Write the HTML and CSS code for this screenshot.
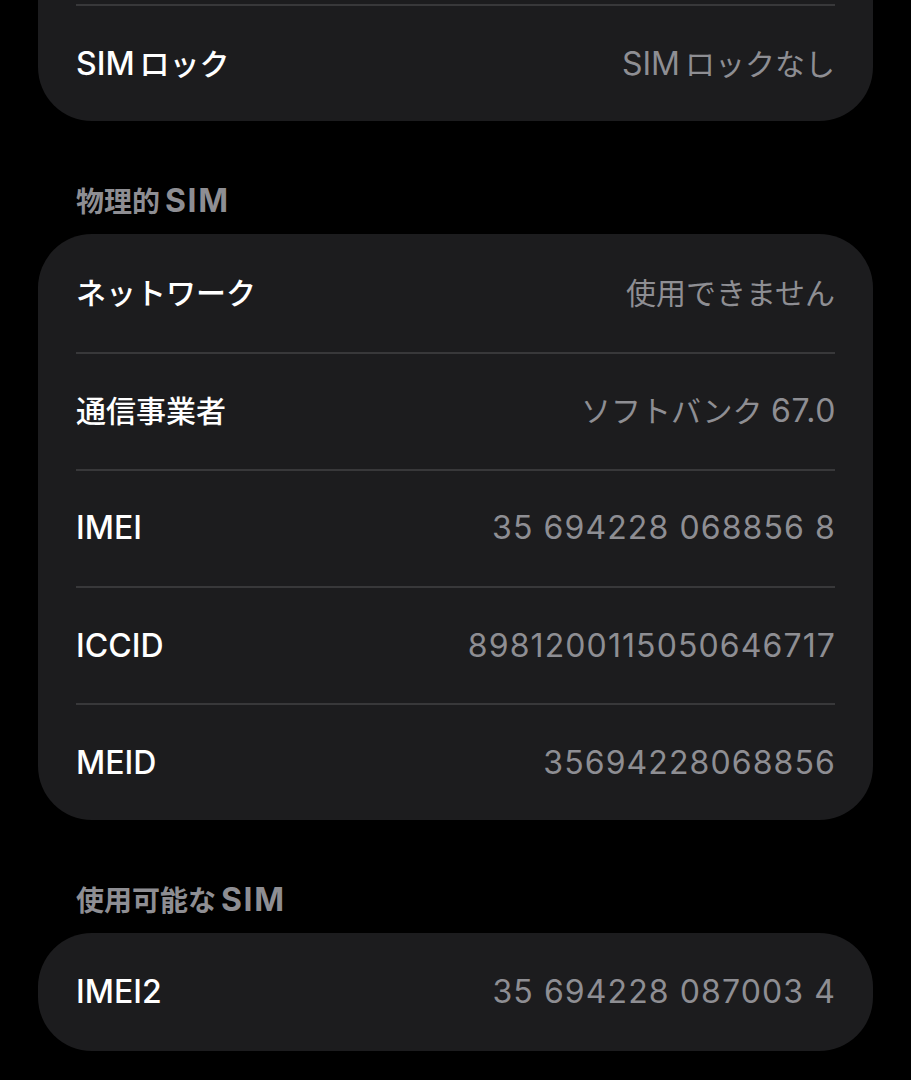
FILE: index.html
```html
<!DOCTYPE html>
<html lang="ja">
<head>
<meta charset="utf-8">
<link rel="stylesheet" href="styles.css">
</head>
<body>
<div class="page">
  <div class="card card-first">
    <div class="row"><span class="label"></span><span class="value"></span></div>
    <div class="row"><span class="label"><span class="lat gap">SIM</span>ロック</span><span class="value"><span class="lat gap">SIM</span>ロックなし</span></div>
  </div>

  <div class="section-title">物理的<span class="lat-h">SIM</span></div>
  <div class="card">
    <div class="row"><span class="label">ネットワーク</span><span class="value">使用できません</span></div>
    <div class="row"><span class="label">通信事業者</span><span class="value">ソフトバンク <span class="num">67.0</span></span></div>
    <div class="row"><span class="label lat">IMEI</span><span class="value num">35 694228 068856 8</span></div>
    <div class="row"><span class="label lat">ICCID</span><span class="value num">8981200115050646717</span></div>
    <div class="row"><span class="label lat">MEID</span><span class="value num">35694228068856</span></div>
  </div>

  <div class="section-title">使用可能な<span class="lat-h">SIM</span></div>
  <div class="card">
    <div class="row"><span class="label lat">IMEI2</span><span class="value num">35 694228 087003 4</span></div>
  </div>
</div>
</body>
</html>
```

FILE: styles.css
```css
html, body {
  margin: 0;
  padding: 0;
  background: #000;
}
body {
  font-family: "Inter", "Noto Sans CJK JP", sans-serif;
  -webkit-font-smoothing: antialiased;
}
.page {
  padding: 0 38px;
  overflow: hidden;
  height: 1080px;
  box-sizing: border-box;
}
.card {
  background: #1c1c1e;
  border-radius: 54px;
  padding: 0 38px;
}
.card-first {
  margin-top: -113px;
}
.row {
  height: 117.2px;
  display: flex;
  align-items: center;
  justify-content: space-between;
  box-sizing: border-box;
  font-size: 30px;
  line-height: 40px;
  white-space: nowrap;
}
.row + .row {
  border-top: 2px solid #38383a;
}
.label {
  color: #fff;
  font-weight: 500;
}
.value {
  color: #8e8e93;
  font-weight: 400;
}
.lat {
  font-size: 32px;
}
.gap {
  margin-right: 5px;
}
.num {
  font-size: 32px;
  letter-spacing: 1.1px;
}
.value.num,
.value .num {
  margin-right: -1px;
}
.value .num {
  letter-spacing: 0.6px;
}
.section-title {
  color: #8e8e93;
  font-size: 28px;
  font-weight: 700;
  line-height: 34px;
  height: 34px;
  padding: 64px 38px 15px;
  white-space: nowrap;
}
.lat-h {
  font-size: 32px;
  line-height: 0;
  font-weight: 700;
  letter-spacing: 1.6px;
  margin-left: 5px;
}
```
